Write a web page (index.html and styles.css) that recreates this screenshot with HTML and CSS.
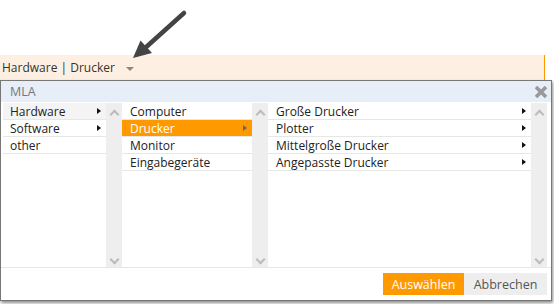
FILE: index.html
```html
<!DOCTYPE html>
<html lang="de">
<head>
    <meta charset="UTF-8">
    <title>MLA Auswahl</title>
    <link rel="stylesheet" href="styles.css">
</head>
<body>
    <div class="page">
        <!-- Hinweis-Pfeil -->
        <svg class="hint-arrow" width="200" height="70" viewBox="0 0 200 70">
            <line x1="184" y1="13" x2="144" y2="49" stroke="#444" stroke-width="4.5" stroke-linecap="round"/>
            <polygon points="133,58 140.5,40.5 152,53" fill="#444"/>
        </svg>

        <div class="field">
            <span>Hardware | Drucker</span>
            <span class="caret"></span>
        </div>

        <div class="dialog">
            <div class="dialog-head">
                <span>MLA</span>
                <svg class="close" width="14" height="14" viewBox="0 0 14 14">
                    <path d="M2 2 L12 12 M12 2 L2 12" stroke="#999" stroke-width="3.6"/>
                </svg>
            </div>

            <div class="dialog-body">
                <ul class="col col-1">
                    <li class="active">Hardware <i class="tri"></i></li>
                    <li>Software <i class="tri"></i></li>
                    <li>other</li>
                </ul>
                <div class="scroll"><span class="up"></span><span class="down"></span></div>

                <ul class="col col-2">
                    <li>Computer</li>
                    <li class="selected">Drucker <i class="tri"></i></li>
                    <li>Monitor</li>
                    <li>Eingabegeräte</li>
                </ul>
                <div class="scroll"><span class="up"></span><span class="down"></span></div>

                <ul class="col col-3">
                    <li>Große Drucker <i class="tri"></i></li>
                    <li>Plotter <i class="tri"></i></li>
                    <li>Mittelgroße Drucker <i class="tri"></i></li>
                    <li>Angepasste Drucker <i class="tri"></i></li>
                </ul>
                <div class="scroll"><span class="up"></span><span class="down"></span></div>
            </div>

            <div class="dialog-foot">
                <button class="btn-ok">Auswählen</button>
                <button class="btn-cancel">Abbrechen</button>
            </div>
        </div>
    </div>
</body>
</html>
```

FILE: styles.css
```css
body {
    margin: 0;
    background: #fff;
    font-family: 'Open Sans', 'Noto Sans', sans-serif;
    font-size: 12px;
    color: #222;
}

.page {
    position: relative;
    width: 554px;
    height: 304px;
    padding-top: 55px;
    box-sizing: border-box;
    overflow: hidden;
}

.hint-arrow {
    position: absolute;
    left: 0;
    top: 0;
}

.field {
    display: flex;
    align-items: center;
    width: 545px;
    height: 25px;
    padding-left: 2px;
    box-sizing: border-box;
    background: #fdf0e3;
    border-right: 1px solid #f90;
    color: #333;
    font-size: 12px;
}

.caret {
    width: 0;
    height: 0;
    margin-left: 11px;
    margin-top: 2px;
    border-left: 4px solid transparent;
    border-right: 4px solid transparent;
    border-top: 4px solid #888;
}

.dialog {
    width: 552px;
    height: 221px;
    box-sizing: border-box;
    border: 1px solid #777;
    background: #fff;
    box-shadow: 1px 2px 3px rgba(0, 0, 0, 0.45);
    display: flex;
    flex-direction: column;
}

.dialog-head {
    display: flex;
    align-items: center;
    justify-content: space-between;
    height: 21px;
    padding: 0 3px 0 9px;
    background: #e8eef7;
    color: #777;
    font-size: 12.5px;
}

.close {
    margin-top: 1px;
}

.dialog-body {
    display: flex;
    height: 166px;
    padding: 1px 2px 0 2px;
    box-sizing: border-box;
    border-bottom: 1px solid #e6e6e6;
}

.col {
    list-style: none;
    margin: 0;
    padding: 0;
}

.col-1 { width: 103px; }
.col-2 { width: 130px; }
.col-3 { width: 263px; }

.col li {
    position: relative;
    height: 17px;
    line-height: 16px;
    padding: 1px 0 0 7px;
    border-bottom: 1px solid #e6e6e6;
    box-sizing: border-box;
}

.col-2 li,
.col-3 li {
    padding-left: 8px;
}

.col li.active {
    background: #f4f4f4;
}

.col li.selected {
    background: #f90;
    color: #fff;
}

.tri {
    position: absolute;
    right: 5px;
    top: 5px;
    width: 0;
    height: 0;
    border-top: 3.5px solid transparent;
    border-bottom: 3.5px solid transparent;
    border-left: 4px solid #111;
}

.selected .tri {
    border-left-color: #666;
}

.scroll {
    width: 16px;
    background: #eee;
    display: flex;
    flex-direction: column;
    justify-content: space-between;
    align-items: center;
    padding: 8px 0 4px;
    box-sizing: border-box;
}

.scroll .up,
.scroll .down {
    width: 5px;
    height: 5px;
    border-left: 2px solid #bbb;
    border-top: 2px solid #bbb;
    transform: rotate(45deg);
}

.scroll .down {
    transform: rotate(225deg);
}

.dialog-foot {
    flex: 1;
    display: flex;
    justify-content: flex-end;
    align-items: flex-start;
    padding: 5px 4px 0 0;
}

.dialog-foot button {
    height: 22px;
    border: none;
    margin: 0;
    padding: 0;
    font-family: inherit;
    font-size: 12.5px;
}

.btn-ok {
    width: 81px;
    background: #f90;
    color: #fff;
}

.btn-cancel {
    width: 83px;
    background: #eee;
    color: #555;
}
```
